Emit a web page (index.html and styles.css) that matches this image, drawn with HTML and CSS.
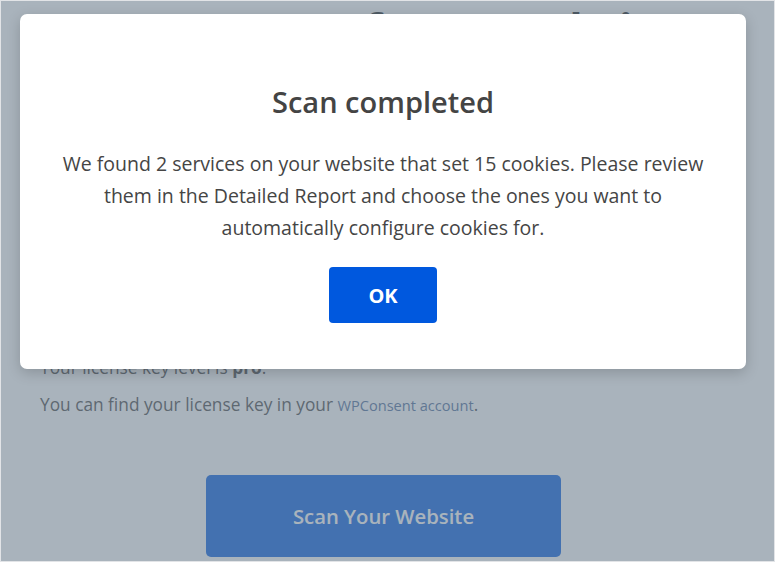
FILE: index.html
```html
<!DOCTYPE html>
<html lang="en">
<head>
<meta charset="utf-8">
<title>WPConsent – Scan</title>
<link rel="stylesheet" href="styles.css">
</head>
<body>
<div class="frame">
  <main class="page">
    <h1 class="page-title">Run a scan of your website</h1>
    <section class="license">
      <p class="license-level">Your license key level is <strong>pro</strong>.</p>
      <p class="license-hint">You can find your license key in your <a class="license-link" href="#">WPConsent account</a>.</p>
    </section>
    <div class="scan-row">
      <button class="scan-btn" type="button">Scan Your Website</button>
    </div>
  </main>
  <div class="overlay">
    <div class="modal" role="dialog" aria-labelledby="scan-title">
      <h2 class="modal-title" id="scan-title">Scan completed</h2>
      <p class="modal-text">We found 2 services on your website that set 15 cookies. Please review them in the Detailed Report and choose the ones you want to automatically configure cookies for.</p>
      <button class="ok-btn" type="button">OK</button>
    </div>
  </div>
</div>
</body>
</html>
```
FILE: styles.css
```css
* { box-sizing: border-box; }
html, body { margin: 0; padding: 0; }
body {
  font-family: "Open Sans", "Noto Sans", sans-serif;
  color: #454545;
  background: #fff;
}
.frame {
  position: relative;
  width: 775px;
  height: 562px;
  border: 1px solid #e2e4e7;
  overflow: hidden;
  background: #fff;
}
.page {
  padding: 4px 47px 0 39px;
}
.page-title {
  margin: 0;
  font-size: 44px;
  line-height: 48px;
  font-weight: 700;
  color: #1d2327;
  text-align: center;
}
.license {
  margin-top: 303px;
}
.license-level,
.license-hint {
  margin: 0;
  font-size: 17.3px;
  line-height: 24px;
}
.license-hint { margin-top: 13px; }
.license-link {
  font-size: 14.6px;
  color: #4a6a99;
  text-decoration: none;
}
.scan-row {
  display: flex;
  justify-content: center;
  margin-top: 58px;
}
.scan-btn {
  width: 355px;
  height: 82px;
  border: 0;
  border-radius: 5px;
  background: #005be0;
  color: #fff;
  font-family: "Open Sans", "Noto Sans", sans-serif;
  font-size: 20.3px;
  font-weight: 600;
}
.overlay {
  position: absolute;
  inset: 0;
  background: rgba(112, 128, 144, 0.6);
  display: flex;
  align-items: flex-start;
  padding: 13px 0 0 19px;
}
.modal {
  width: 726px;
  background: #fff;
  border-radius: 7px;
  box-shadow: 0 4px 14px rgba(0, 0, 0, 0.18);
  padding: 70px 20px 46px;
  text-align: center;
}
.modal-title {
  margin: 0;
  font-size: 29px;
  line-height: 36px;
  font-weight: 600;
  color: #444;
}
.modal-text {
  margin: 28px auto 0;
  max-width: 662px;
  font-size: 19.5px;
  line-height: 32px;
  color: #454545;
}
.ok-btn {
  display: block;
  margin: 23px auto 0;
  width: 108px;
  height: 56px;
  border: 0;
  border-radius: 4px;
  background: #0058de;
  color: #fff;
  font-family: "Open Sans", "Noto Sans", sans-serif;
  font-size: 20px;
  font-weight: 700;
}
```
